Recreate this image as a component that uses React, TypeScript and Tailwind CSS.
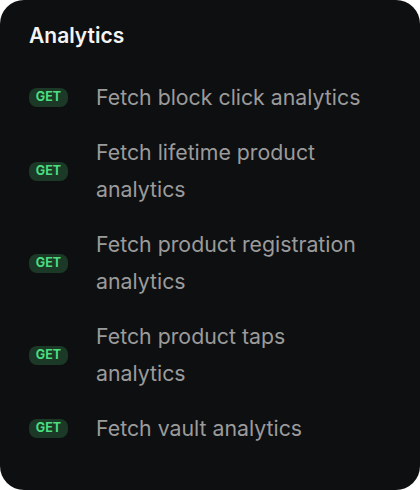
const endpoints = [
  'Fetch block click analytics',
  'Fetch lifetime product analytics',
  'Fetch product registration analytics',
  'Fetch product taps analytics',
  'Fetch vault analytics',
];

function MethodBadge() {
  return (
    <span className="flex h-[19px] w-[39px] shrink-0 items-center justify-center rounded-[8px] bg-[#1b3926] text-[12.5px] font-bold text-[#4ade80]">
      GET
    </span>
  );
}

export default function App() {
  return (
    <div className="min-h-[490px] w-[420px] bg-white" style={{ fontFamily: 'Inter, "Noto Sans", sans-serif' }}>
      <div className="flex h-[490px] w-[420px] flex-col rounded-[24px] bg-[#0e0f11] pl-[29px] pt-[22px]">
        <h2 className="text-[21px] font-semibold leading-[28px] text-[#f4f4f4]">Analytics</h2>
        <div className="mt-[29px] flex flex-col gap-[18px]">
          {endpoints.map((name) => (
            <div key={name} className="flex items-center gap-[28px]">
              <MethodBadge />
              <span className="max-w-[270px] text-[21.3px] leading-[37px] text-[#9b9b9b]">{name}</span>
            </div>
          ))}
        </div>
      </div>
    </div>
  );
}
